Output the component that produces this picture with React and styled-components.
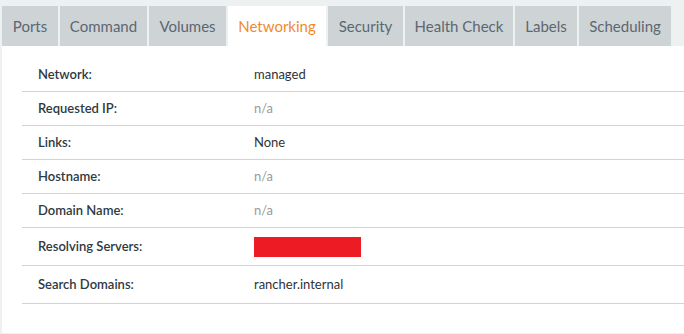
import React from "react";
import styled, { createGlobalStyle } from "styled-components";

const Global = createGlobalStyle`
  html, body { margin: 0; padding: 0; background: #eef1f2; }
  body { font-family: Lato, "Open Sans", sans-serif; }
  * { box-sizing: border-box; }
`;

const Page = styled.div`
  width: 684px;
  height: 334px;
  padding: 6px 0 0 2px;
  background: #eef1f2;
  display: flex;
  flex-direction: column;
`;

const TabBar = styled.div`
  display: flex;
  gap: 2px;
  height: 40px;
`;

const Tab = styled.div`
  display: flex;
  align-items: center;
  justify-content: center;
  width: ${(p) => p.$w}px;
  height: 40px;
  font-size: 15px;
  color: ${(p) => (p.$active ? "#ef8a2e" : "#5c6770")};
  background: ${(p) => (p.$active ? "#ffffff" : "#ced3d6")};
`;

const Panel = styled.div`
  background: #ffffff;
  height: 287px;
  padding: 12px 0 0 20px;
`;

const Row = styled.div`
  display: flex;
  align-items: center;
  height: ${(p) => (p.$tall ? 38 : 34)}px;
  padding-left: 16px;
  border-bottom: 1px solid #cfd4d6;
  font-size: 13px;
  line-height: 17px;
`;

const Label = styled.div`
  width: 216px;
  flex: none;
  color: #2e3a42;
  font-weight: 600;
`;

const Value = styled.div`
  color: ${(p) => (p.$muted ? "#9a9a9a" : "#2f3335")};
`;

const Redacted = styled.div`
  width: 107px;
  height: 20px;
  background: #ed1c24;
`;

const tabs = [
  ["Ports", 56],
  ["Command", 87],
  ["Volumes", 77],
  ["Networking", 98],
  ["Security", 75],
  ["Health Check", 108],
  ["Labels", 62],
  ["Scheduling", 92],
];

const rows = [
  { l: "Network:", v: "managed" },
  { l: "Requested IP:", v: "n/a", muted: true },
  { l: "Links:", v: "None" },
  { l: "Hostname:", v: "n/a", muted: true },
  { l: "Domain Name:", v: "n/a", muted: true },
  { l: "Resolving Servers:", v: null, tall: true },
  { l: "Search Domains:", v: "rancher.internal", tall: true },
];

export default function App() {
  return (
    <Page>
      <Global />
      <TabBar>
        {tabs.map(([t, w]) => (
          <Tab key={t} $w={w} $active={t === "Networking"}>
            {t}
          </Tab>
        ))}
      </TabBar>
      <Panel>
        {rows.map((r) => (
          <Row key={r.l} $tall={r.tall}>
            <Label>{r.l}</Label>
            {r.v === null ? <Redacted /> : <Value $muted={r.muted}>{r.v}</Value>}
          </Row>
        ))}
      </Panel>
    </Page>
  );
}
